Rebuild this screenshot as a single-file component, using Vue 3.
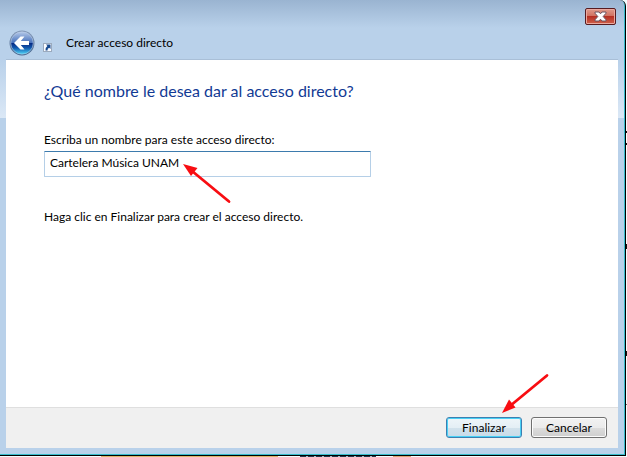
<script setup>
import { ref } from 'vue'

const name = ref('Cartelera Música UNAM')
</script>

<template>
  <div class="desktop">
    <main class="window">
      <header class="titlebar">
        <button class="close" type="button" aria-label="Cerrar">
          <svg width="13" height="11" viewBox="0 0 13 11" aria-hidden="true">
            <path d="M1 1h4l1.500 1.800L8 1h4v1.200L9.200 5.500 12 8.800V10H8L6.500 8.200 5 10H1V8.800l2.800-3.300L1 2.200z" fill="#fff" stroke="#6b5560" stroke-width="1" stroke-linejoin="round" />
          </svg>
        </button>
      </header>

      <nav class="navbar">
        <button class="back" type="button" aria-label="Atrás">
          <svg width="26" height="26" viewBox="0 0 26 26" aria-hidden="true">
            <defs>
              <linearGradient id="ring" x1="0" y1="0" x2="0" y2="1">
                <stop offset="0" stop-color="#8398b8" />
                <stop offset="1" stop-color="#47678f" />
              </linearGradient>
              <linearGradient id="top" x1="0" y1="0" x2="0" y2="1">
                <stop offset="0" stop-color="#b4c8e8" />
                <stop offset="0.480" stop-color="#4a74bd" />
                <stop offset="0.520" stop-color="#072c85" />
                <stop offset="0.720" stop-color="#1259ae" />
                <stop offset="1" stop-color="#50d5f8" />
              </linearGradient>
            </defs>
            <circle cx="13" cy="13" r="12.500" fill="url(#ring)" />
            <circle cx="13" cy="13" r="11.200" fill="url(#top)" stroke="#c3d4ea" stroke-width="0.500" />
            <path d="M5 13l6.500-6.500h4L11.800 11H20v4h-8.200l3.700 4.500h-4z" fill="#fff" />
          </svg>
        </button>
        <svg class="shortcut" width="9" height="9" viewBox="0 0 9 9" aria-hidden="true">
          <rect x="0.500" y="0.500" width="8" height="8" fill="#fafcff" stroke="#9baabd" />
          <path d="M3 1.500h4.500V6L6.200 4.700Q4.300 5.500 4.500 7.500H2.500Q2 4.800 4.400 3z" fill="#16498f" />
        </svg>
        <span class="caption">Crear acceso directo</span>
      </nav>

      <section class="content">
        <h1>¿Qué nombre le desea dar al acceso directo?</h1>
        <label for="shortcut-name">Escriba un nombre para este acceso directo:</label>
        <div class="field">
          <input id="shortcut-name" v-model="name" type="text" />
          <svg class="arrow arrow-field" width="50" height="42" viewBox="0 0 50 42" aria-hidden="true">
            <path d="M47 39.500L10 9" stroke="#f80d12" stroke-width="2.800" stroke-linecap="round" />
            <path d="M1 2l14.500 4-6.500 8z" fill="#f80d12" />
          </svg>
        </div>
        <p>Haga clic en Finalizar para crear el acceso directo.</p>
      </section>

      <footer class="actions">
        <button class="action primary" type="button">Finalizar</button>
        <button class="action" type="button">Cancelar</button>
        <svg class="arrow arrow-action" width="50" height="42" viewBox="0 0 50 42" aria-hidden="true">
          <path d="M47 2.500L10 33" stroke="#f80d12" stroke-width="2.800" stroke-linecap="round" />
          <path d="M2 40l7-13.500 6.500 8z" fill="#f80d12" />
        </svg>
      </footer>
    </main>
  </div>
</template>

<style>
body {
  margin: 0;
}
</style>

<style scoped>
.desktop {
  display: flex;
  box-sizing: border-box;
  min-height: 100vh;
  padding: 0 1px 1px 0;
  font-family: Lato, "Open Sans", sans-serif;
  font-size: 12px;
  line-height: 16px;
  color: #000;
  background:
    linear-gradient(90deg, transparent 101px, #dcb568 101px, #dcb568 278px, transparent 278px, transparent 393px, #dda573 393px, #dda573 411px, transparent 411px) 0 100% / 100% 1px no-repeat,
    repeating-linear-gradient(90deg, #26364a 0 6px, #a9c0cc 6px 8px) 300px 100% / 76px 1px no-repeat,
    linear-gradient(180deg, #111 2px, #fff 2px 12px, #111 12px 14px, #fff 14px) 100% 131px / 1px 20px no-repeat,
    linear-gradient(#111, #111) 100% 244px / 1px 5px no-repeat,
    linear-gradient(#111, #111) 100% 351px / 1px 5px no-repeat,
    linear-gradient(#666, #666) 100% 404px / 1px 1px no-repeat,
    #f4fdff;
}

.window {
  flex: 1;
  display: flex;
  flex-direction: column;
  padding: 0 7px 7px 6px;
  border: solid #000;
  border-width: 0 1px 1px 0;
  border-top-right-radius: 6px;
  box-shadow: inset -1px -1px #37bccb;
  background:
    linear-gradient(180deg, #b9d1ea, #dbe8f6) 0 60px / 100% 58px no-repeat,
    linear-gradient(180deg, #9ab4d1, #b9d1ea 28px, #b9d1ea) 0 0 / 100% 60px no-repeat,
    #b9d1ea;
}

.titlebar {
  display: flex;
  justify-content: flex-end;
  padding: 8px 2px 0 0;
  height: 22px;
}

.close {
  display: grid;
  place-items: center;
  width: 31px;
  height: 17px;
  padding: 0;
  border: 1px solid #571c20;
  border-radius: 2px;
  box-shadow: inset 0 0 0 1px #eba99f;
  background: linear-gradient(180deg, #e09a8b, #d0705f 48%, #b62f22 50%, #cf624c);
}

.navbar {
  display: flex;
  align-items: center;
  height: 26px;
  padding: 0 3px 3px;
  border-bottom: 1px solid #a9bfd7;
}

.back {
  width: 26px;
  height: 26px;
  padding: 0;
  border: 0;
  background: none;
}

.back svg {
  display: block;
}

.shortcut {
  align-self: flex-end;
  margin: 0 14px 4px 8px;
}

.content {
  flex: 1;
  padding: 20px 38px;
  background: #fff;
}

h1 {
  margin: 0 0 30px;
  font-size: 16px;
  font-weight: 400;
  line-height: 22px;
  color: #123a94;
}

label {
  display: block;
  margin-bottom: 3px;
}

.field {
  position: relative;
  margin-bottom: 32px;
}

input {
  display: block;
  box-sizing: border-box;
  width: 61%;
  height: 26px;
  padding: 0 5px 4px;
  border: 1px solid #b5cfe7;
  border-top-color: #3d7bad;
  border-radius: 1px;
  font: inherit;
  color: inherit;
  background: #fff;
  outline: none;
}

p {
  margin: 0;
}

.actions {
  position: relative;
  display: flex;
  justify-content: flex-end;
  gap: 9px;
  padding: 9px 11px 10px;
  border-top: 1px solid #dfdfdf;
  background: #f0f0f0;
}

.action {
  width: 76px;
  height: 21px;
  padding: 0;
  border: 1px solid #707070;
  border-radius: 3px;
  font: inherit;
  color: inherit;
  background: linear-gradient(180deg, #f2f2f2, #ebebeb 50%, #dddddd 50%, #cfcfcf);
  box-shadow: inset 0 0 0 1px #fcfcfc;
}

.primary {
  border-color: #3c7fb1;
  background: linear-gradient(180deg, #eef5f9, #e4eff5 50%, #d2e2ec 50%, #c8dbe8);
  box-shadow: inset 0 0 0 1px #48d0f5;
}

.arrow {
  position: absolute;
  fill: none;
  pointer-events: none;
}

.arrow-field {
  top: 11px;
  left: 138px;
}

.arrow-action {
  top: -35px;
  right: 68px;
}
</style>
